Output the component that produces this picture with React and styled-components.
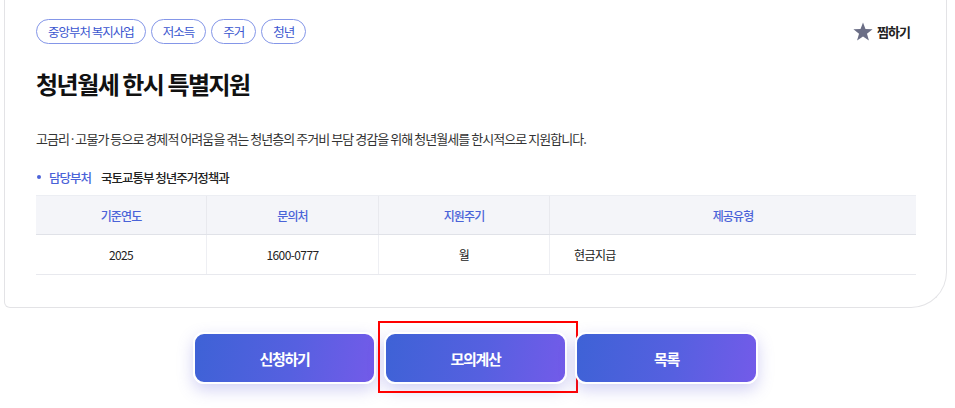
import React from 'react';
import styled, { createGlobalStyle } from 'styled-components';

const GlobalStyle = createGlobalStyle`
    body {
        margin: 0;
        background: #ffffff;
        font-family: "Noto Sans CJK KR", "Noto Sans", sans-serif;
        color: #222;
    }
`

const tags = ['중앙부처 복지사업', '저소득', '주거', '청년'];

const info = [
    { head: '기준연도', value: '2025' },
    { head: '문의처', value: '1600-0777' },
    { head: '지원주기', value: '월' },
    { head: '제공유형', value: '현금지급', left: true },
];

function StarIcon() {
    return (
        <svg width="20" height="19" viewBox="0 0 24 23">
            <polygon
                points="12,0.5 15,8.6 23.6,8.9 16.8,14.2 19.2,22.5 12,17.6 4.8,22.5 7.2,14.2 0.4,8.9 9,8.6"
                fill="#6b6e86"
            />
        </svg>
    );
}

export default function App() {
    return (
        <>
            <GlobalStyle />
            <Page>
                <Card>
                    <TopRow>
                        <TagList>
                            {tags.map((t) => (
                                <Tag key={t}>{t}</Tag>
                            ))}
                        </TagList>
                        <LikeButton>
                            <StarIcon />
                            찜하기
                        </LikeButton>
                    </TopRow>

                    <Title>청년월세 한시 특별지원</Title>

                    <Description>
                        고금리·고물가 등으로 경제적 어려움을 겪는 청년층의 주거비 부담 경감을 위해 청년월세를 한시적으로 지원합니다.
                    </Description>

                    <Dept>
                        <DeptLabel>담당부처</DeptLabel>
                        <DeptValue>국토교통부 청년주거정책과</DeptValue>
                    </Dept>

                    <InfoTable>
                        <thead>
                            <tr>
                                {info.map((c) => (
                                    <Th key={c.head}>{c.head}</Th>
                                ))}
                            </tr>
                        </thead>
                        <tbody>
                            <tr>
                                {info.map((c) => (
                                    <Td key={c.head} $left={c.left}>{c.value}</Td>
                                ))}
                            </tr>
                        </tbody>
                    </InfoTable>
                </Card>

                <Actions>
                    <ActionButton>신청하기</ActionButton>
                    <ActionButton $highlight>모의계산</ActionButton>
                    <ActionButton>목록</ActionButton>
                </Actions>
            </Page>
        </>
    );
}

const Page = styled.div`
    width: 943px;
    margin-left: 4px;
    padding-bottom: 30px;
`

const Card = styled.div`
    border: 1px solid #e3e3e6;
    border-top: none;
    border-radius: 0 0 36px 6px;
    padding: 19px 30px 32px 31px;
`

const TopRow = styled.div`
    display: flex;
    align-items: center;
    justify-content: space-between;
`

const TagList = styled.div`
    display: flex;
    gap: 5px;
`

const Tag = styled.span`
    display: inline-flex;
    align-items: center;
    height: 25px;
    box-sizing: border-box;
    padding: 0 11px;
    border: 1px solid #8496e8;
    border-radius: 13px;
    color: #3b56cf;
    font-size: 12.5px;
    letter-spacing: -1px;
`

const LikeButton = styled.span`
    display: inline-flex;
    align-items: center;
    gap: 4px;
    margin-right: 6px;
    font-size: 13px;
    font-weight: 700;
    letter-spacing: -1px;
    color: #222;
`

const Title = styled.h1`
    margin: 24px 0 0;
    font-size: 24px;
    line-height: 31px;
    font-weight: 700;
    letter-spacing: -1.5px;
    color: #111;
`

const Description = styled.p`
    margin: 30px 0 0;
    font-size: 13px;
    line-height: 20px;
    letter-spacing: -0.95px;
    color: #333;
`

const Dept = styled.div`
    display: flex;
    align-items: center;
    margin-top: 18px;
    height: 20px;
    font-size: 12.5px;
    letter-spacing: -1px;

    &::before {
        content: '';
        width: 4px;
        height: 4px;
        border-radius: 50%;
        background: #4c63d9;
        margin: 0 8px 0 1px;
    }
`

const DeptLabel = styled.span`
    color: #4a62d8;
    font-weight: 500;
    margin-right: 10px;
`

const DeptValue = styled.span`
    color: #222;
    font-weight: 500;
`

const InfoTable = styled.table`
    width: 100%;
    margin-top: 8px;
    border-collapse: collapse;
    table-layout: fixed;

    th:nth-child(1), td:nth-child(1) { width: 170px; }
    th:nth-child(2), td:nth-child(2) { width: 171px; }
    th:nth-child(3), td:nth-child(3) { width: 170px; }
`

const Th = styled.th`
    height: 38px;
    padding: 0;
    background: #f4f5f9;
    border-top: 1px solid #eceef3;
    border-bottom: 1px solid #e0e2e8;
    border-left: 1px solid #e8e9ee;
    color: #4a63d8;
    font-size: 12px;
    font-weight: 500;
    letter-spacing: -0.9px;

    &:first-child { border-left: none; }
`

const Td = styled.td`
    height: 39px;
    padding: 0 ${(p) => (p.$left ? '24px' : '0')};
    border-bottom: 1px solid #e8e9ee;
    border-left: 1px solid #eeeff3;
    text-align: ${(p) => (p.$left ? 'left' : 'center')};
    color: #222;
    font-size: 12px;
    letter-spacing: -0.6px;

    &:first-child { border-left: none; }
`

const Actions = styled.div`
    display: flex;
    justify-content: center;
    gap: 8px;
    margin-top: 24px;
`

const ActionButton = styled.button`
    position: relative;
    box-sizing: border-box;
    width: 183px;
    height: 52px;
    border: 2px solid #ffffff;
    border-radius: 11px;
    background: linear-gradient(100deg, #3e62d6 0%, #5660e0 55%, #735be9 100%);
    box-shadow: 0 6px 16px rgba(98, 92, 214, 0.28);
    color: #ffffff;
    font-family: inherit;
    font-size: 15px;
    font-weight: 700;
    letter-spacing: -1.3px;
    cursor: pointer;

    ${(p) => p.$highlight && `
        &::after {
            content: '';
            position: absolute;
            top: -13px;
            left: -8px;
            right: -13px;
            bottom: -11px;
            border: 2px solid #f00;
            pointer-events: none;
        }
    `}
`
